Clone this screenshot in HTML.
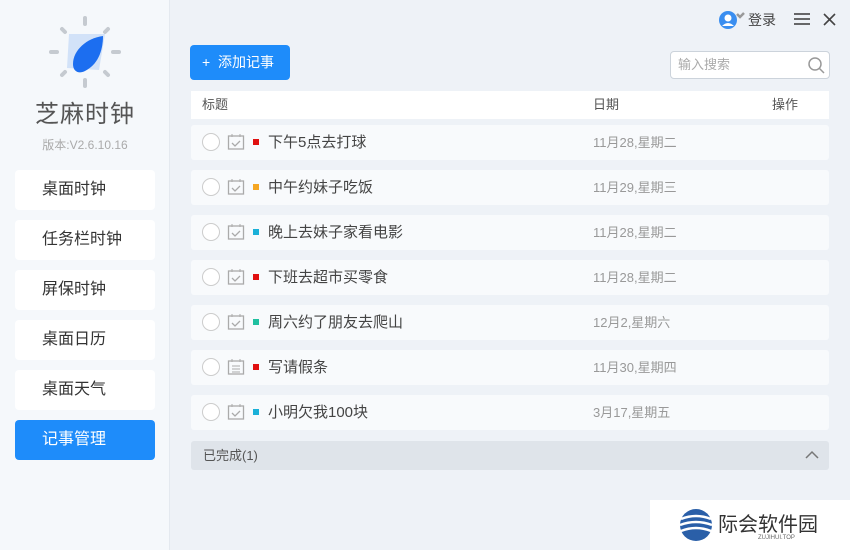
<!DOCTYPE html><html><head><meta charset="utf-8"><style>
*{margin:0;padding:0;box-sizing:border-box}
body{width:850px;height:550px;overflow:hidden;font-family:"Liberation Sans","Noto Sans CJK SC",sans-serif;background:#eef2f7;position:relative;color:#333}
.side{position:absolute;left:0;top:0;width:170px;height:550px;background:#f5f8fb;border-right:1px solid #e4e9ef}
.title{position:absolute;top:94px;width:170px;text-align:center;font-size:24px;color:#555;letter-spacing:1px}
.ver{position:absolute;top:136px;width:170px;text-align:center;font-size:12px;color:#aaa}
.nav{position:absolute;left:15px;width:140px;height:40px;background:#fff;border-radius:4px;font-size:16px;line-height:40px;padding-left:27px;color:#333}
.nav.on{background:#1e8cfa;color:#fff}
.btn{position:absolute;left:190px;top:45px;width:100px;height:35px;background:#1e8cfa;border-radius:4px;color:#fff;font-size:14px;line-height:35px;padding-left:12px}
.search{position:absolute;left:670px;top:51px;width:160px;height:28px;border:1px solid #ccd3db;border-radius:4px;background:#fff;font-size:13px;color:#aaa;line-height:26px;padding-left:7px}
.hdr{position:absolute;left:191px;top:91px;width:638px;height:28px;background:#fff;font-size:13px;color:#555;line-height:28px}
.row{position:absolute;left:191px;width:638px;height:35px;background:#f8fafc;border-radius:3px;font-size:15px;line-height:35px}
.circ{position:absolute;left:11px;top:8px;width:18px;height:18px;border:1px solid #ccc;border-radius:50%;background:#fff}
.cal{position:absolute;left:36px;top:8px}
.sq{position:absolute;left:62px;top:14px;width:6px;height:6px}
.t{position:absolute;left:77px;color:#444}
.d{position:absolute;left:402px;font-size:13px;color:#999}
.done{position:absolute;left:191px;top:441px;width:638px;height:29px;background:#dfe4ea;border-radius:3px;font-size:13px;line-height:29px;padding-left:12px;color:#555}
.wm{position:absolute;left:650px;top:500px;width:200px;height:50px;background:#fff}
</style></head><body>
<div class="side">
<svg style="position:absolute;left:45px;top:12px" width="80" height="80" viewBox="0 0 80 80">
<g stroke="#c5cad0" stroke-width="4" stroke-linecap="round"><line x1="40" y1="6" x2="40" y2="12"/><line x1="40" y1="68" x2="40" y2="74"/><line x1="6" y1="40" x2="12" y2="40"/><line x1="68" y1="40" x2="74" y2="40"/><line x1="17" y1="17" x2="20" y2="20"/><line x1="60" y1="20" x2="63" y2="17"/><line x1="17" y1="63" x2="20" y2="60"/><line x1="60" y1="60" x2="63" y2="63"/></g>
<polygon points="24,22 60,22 54,58 22,56" fill="#d2e2f8"/>
<path d="M58,24 C42,26 28,38 28,52 C28,60 34,62 40,59 C52,53 58,40 58,24Z" fill="#1c6ef0"/>
</svg>
<div class="title">芝麻时钟</div><div class="ver">版本:V2.6.10.16</div>
<div class="nav" style="top:170px">桌面时钟</div>
<div class="nav" style="top:220px">任务栏时钟</div>
<div class="nav" style="top:270px">屏保时钟</div>
<div class="nav" style="top:320px">桌面日历</div>
<div class="nav" style="top:370px">桌面天气</div>
<div class="nav on" style="top:420px">记事管理</div>
</div>
<svg style="position:absolute;left:718px;top:10px" width="28" height="20"><circle cx="10" cy="10" r="9" fill="#3a8ef0"/><circle cx="10" cy="8" r="3.5" fill="#fff"/><path d="M4 16 Q10 10 16 16" fill="#fff"/><path d="M19 4 l3 3 l4 -4" stroke="#999" stroke-width="2.5" fill="none"/></svg>
<div style="position:absolute;left:748px;top:10px;font-size:14px;color:#444">登录</div>
<svg style="position:absolute;left:794px;top:12px" width="16" height="14"><g stroke="#444" stroke-width="1.6"><line x1="0" y1="2" x2="16" y2="2"/><line x1="0" y1="7" x2="16" y2="7"/><line x1="0" y1="12" x2="16" y2="12"/></g></svg>
<svg style="position:absolute;left:823px;top:13px" width="13" height="13"><g stroke="#444" stroke-width="1.6"><line x1="1" y1="1" x2="12" y2="12"/><line x1="12" y1="1" x2="1" y2="12"/></g></svg>
<div class="btn">+&nbsp; 添加记事</div>
<div class="search">输入搜索<svg style="position:absolute;right:4px;top:4px" width="18" height="18"><circle cx="8" cy="8" r="6" stroke="#999" stroke-width="1.5" fill="none"/><line x1="12.5" y1="12.5" x2="17" y2="17" stroke="#999" stroke-width="1.5"/></svg></div>
<div class="hdr"><span style="position:absolute;left:11px">标题</span><span style="position:absolute;left:402px">日期</span><span style="position:absolute;left:581px">操作</span></div>
<div class="row" style="top:125px"><div class="circ"></div><svg class="cal" width="18" height="18"><rect x="1.5" y="3" width="15" height="13" fill="none" stroke="#aaa" stroke-width="1.3"/><line x1="5" y1="1" x2="5" y2="4" stroke="#aaa"/><line x1="13" y1="1" x2="13" y2="4" stroke="#aaa"/><path d="M5 10 l3 3 l5 -5" fill="none" stroke="#aaa" stroke-width="1.3"/></svg><div class="sq" style="background:#e01010"></div><span class="t">下午5点去打球</span><span class="d">11月28,星期二</span></div>
<div class="row" style="top:170px"><div class="circ"></div><svg class="cal" width="18" height="18"><rect x="1.5" y="3" width="15" height="13" fill="none" stroke="#aaa" stroke-width="1.3"/><line x1="5" y1="1" x2="5" y2="4" stroke="#aaa"/><line x1="13" y1="1" x2="13" y2="4" stroke="#aaa"/><path d="M5 10 l3 3 l5 -5" fill="none" stroke="#aaa" stroke-width="1.3"/></svg><div class="sq" style="background:#f5a623"></div><span class="t">中午约妹子吃饭</span><span class="d">11月29,星期三</span></div>
<div class="row" style="top:215px"><div class="circ"></div><svg class="cal" width="18" height="18"><rect x="1.5" y="3" width="15" height="13" fill="none" stroke="#aaa" stroke-width="1.3"/><line x1="5" y1="1" x2="5" y2="4" stroke="#aaa"/><line x1="13" y1="1" x2="13" y2="4" stroke="#aaa"/><path d="M5 10 l3 3 l5 -5" fill="none" stroke="#aaa" stroke-width="1.3"/></svg><div class="sq" style="background:#1ab0d8"></div><span class="t">晚上去妹子家看电影</span><span class="d">11月28,星期二</span></div>
<div class="row" style="top:260px"><div class="circ"></div><svg class="cal" width="18" height="18"><rect x="1.5" y="3" width="15" height="13" fill="none" stroke="#aaa" stroke-width="1.3"/><line x1="5" y1="1" x2="5" y2="4" stroke="#aaa"/><line x1="13" y1="1" x2="13" y2="4" stroke="#aaa"/><path d="M5 10 l3 3 l5 -5" fill="none" stroke="#aaa" stroke-width="1.3"/></svg><div class="sq" style="background:#e01010"></div><span class="t">下班去超市买零食</span><span class="d">11月28,星期二</span></div>
<div class="row" style="top:305px"><div class="circ"></div><svg class="cal" width="18" height="18"><rect x="1.5" y="3" width="15" height="13" fill="none" stroke="#aaa" stroke-width="1.3"/><line x1="5" y1="1" x2="5" y2="4" stroke="#aaa"/><line x1="13" y1="1" x2="13" y2="4" stroke="#aaa"/><path d="M5 10 l3 3 l5 -5" fill="none" stroke="#aaa" stroke-width="1.3"/></svg><div class="sq" style="background:#20c0a0"></div><span class="t">周六约了朋友去爬山</span><span class="d">12月2,星期六</span></div>
<div class="row" style="top:350px"><div class="circ"></div><svg class="cal" width="18" height="18"><rect x="1.5" y="3" width="15" height="13" fill="none" stroke="#aaa" stroke-width="1.3"/><line x1="5" y1="1" x2="5" y2="4" stroke="#aaa"/><line x1="13" y1="1" x2="13" y2="4" stroke="#aaa"/><line x1="5" y1="8" x2="13" y2="8" stroke="#aaa"/><line x1="5" y1="11" x2="13" y2="11" stroke="#aaa"/><line x1="5" y1="14" x2="13" y2="14" stroke="#aaa"/></svg><div class="sq" style="background:#e01010"></div><span class="t">写请假条</span><span class="d">11月30,星期四</span></div>
<div class="row" style="top:395px"><div class="circ"></div><svg class="cal" width="18" height="18"><rect x="1.5" y="3" width="15" height="13" fill="none" stroke="#aaa" stroke-width="1.3"/><line x1="5" y1="1" x2="5" y2="4" stroke="#aaa"/><line x1="13" y1="1" x2="13" y2="4" stroke="#aaa"/><path d="M5 10 l3 3 l5 -5" fill="none" stroke="#aaa" stroke-width="1.3"/></svg><div class="sq" style="background:#1ab0d8"></div><span class="t">小明欠我100块</span><span class="d">3月17,星期五</span></div>
<div class="done">已完成(1)<svg style="position:absolute;right:10px;top:9px" width="14" height="10"><path d="M1 8 L7 2 L13 8" fill="none" stroke="#777" stroke-width="1.5"/></svg></div>
<div class="wm"><svg style="position:absolute;left:28px;top:7px" width="36" height="36"><circle cx="18" cy="18" r="16" fill="#2a5fa8"/><path d="M3 12 Q18 6 33 12 M2 18 Q18 12 34 18 M3 24 Q18 18 33 24" stroke="#fff" stroke-width="2.5" fill="none"/></svg><div style="position:absolute;left:68px;top:8px;font-size:20px;color:#333">际会软件园</div><div style="position:absolute;left:108px;top:35px;font-size:6px;color:#666">ZUJIHUI.TOP</div></div>
</body></html>
